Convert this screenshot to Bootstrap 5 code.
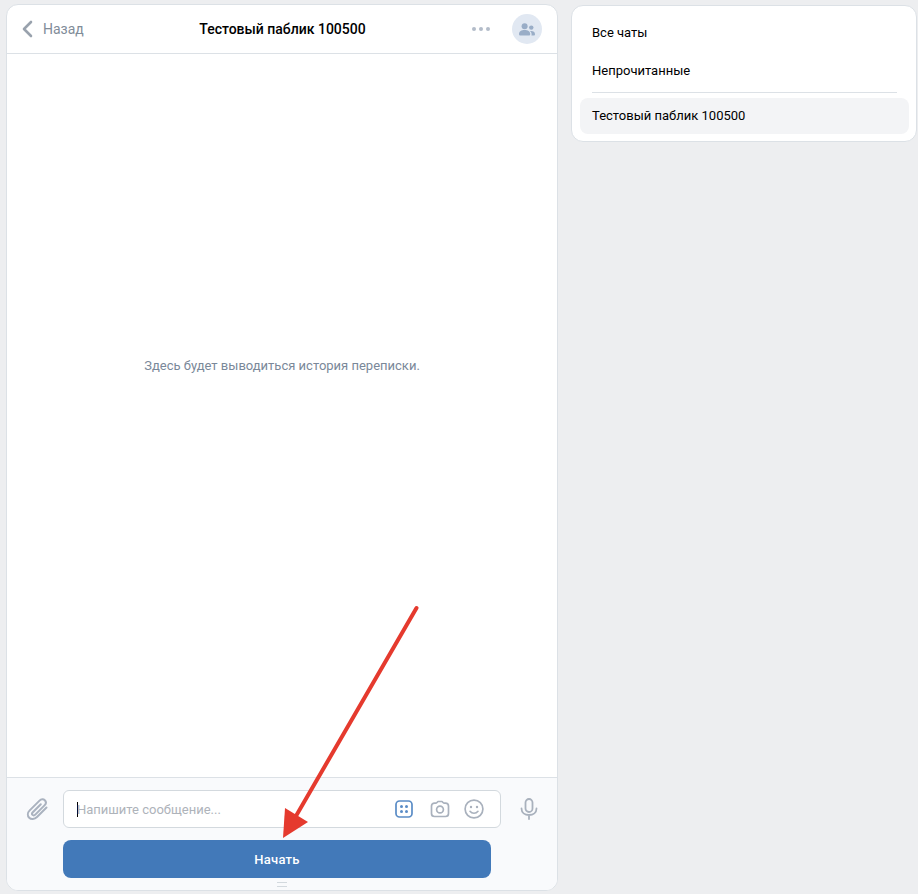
<!DOCTYPE html>
<html lang="ru">

<head>
    <meta charset="UTF-8" />
    <meta name="viewport" content="width=device-width, initial-scale=1" />
    <title>Тестовый паблик 100500</title>
    <link href="https://cdn.jsdelivr.net/npm/bootstrap@5.3.2/dist/css/bootstrap.min.css" rel="stylesheet" />
    <style>
        html, body { height: 100%; }
        body {
            background: #edeef0;
            font-family: Roboto, "Liberation Sans", sans-serif;
            font-size: 13px;
            color: #000;
            overflow: hidden;
        }
        .page-wrap { width: 918px; height: 894px; padding: 4px 0 3px 6px; gap: 13px; }
        .chat-panel {
            width: 552px; background: #fff;
            border: 1px solid #dce1e6; border-radius: 12px; overflow: hidden;
        }
        .chat-head {
            height: 49px; padding: 0 15px 0 14px;
            border-bottom: 1px solid #dce1e6;
        }
        .back-link { color: #818c99; font-size: 14px; width: 140px; gap: 10px; }
        .chat-title { font-weight: 500; font-size: 14px; margin-left: 2px; }
        .head-tools { width: 140px; gap: 21px; }
        .avatar-btn {
            width: 30px; height: 30px; border-radius: 50%; background: #e1e8f2;
        }
        .history-note { color: #7a8899; font-size: 13px; padding-bottom: 100px; }
        .composer {
            height: 113px; background: #f9fafc;
            border-top: 1px solid #dce1e6;
            padding: 12px 0 0 18px;
        }
        .composer-row { gap: 12px; }
        .msg-box {
            width: 438px; height: 38px; background: #fff;
            border: 1px solid #d3d9de; border-radius: 6px;
            padding: 0 16px 0 13px; flex-shrink: 0;
        }
        .caret-mark { width: 1px; height: 15px; background: #000; }
        .msg-hint { color: #aeb3ba; font-size: 13px; margin-left: -1px; padding-top: 1px; }
        .box-icons { gap: 14px; }
        .grid-icon { margin-right: 3px; }
        .mic-icon { flex-shrink: 0; margin-left: 7px; }
        .start-btn {
            display: block; width: 428px; height: 38px; margin: 12px 0 0 38px; padding: 1px 0 0;
            background: #4279b9; border: 0; border-radius: 8px;
            color: #fff; font-size: 13px; font-weight: 500; letter-spacing: .25px;
        }
        .grip-mark {
            width: 10px; height: 5px; margin: 4px 0 0 252px;
            border-top: 1px solid #d3d9de; border-bottom: 1px solid #d3d9de;
        }
        .side-panel {
            width: 346px; height: 137px; margin-top: 1px; padding: 8px;
            background: #fff; border: 1px solid #dce1e6; border-radius: 12px;
        }
        .side-item { height: 38px; padding: 0 12px; color: #000; text-decoration: none; }
        .side-sep { height: 1px; margin: 2px 11px 5px 12px; background: #dce1e6; }
        .side-item.is-active { height: 36px; margin-right: -1px; background: #f3f4f6; border-radius: 8px; }
        .note-arrow { position: absolute; left: 0; top: 0; pointer-events: none; }
    </style>
</head>

<body>
    <div class="page-wrap d-flex align-items-start">
        <div class="chat-panel d-flex flex-column h-100">
            <div class="chat-head d-flex align-items-center justify-content-between flex-shrink-0">
                <div class="back-link d-flex align-items-center">
                    <svg width="12" height="18" viewBox="0 0 12 18" fill="none"><path d="M10 2 3 9l7 7" stroke="#99a2ad" stroke-width="2.6" stroke-linecap="round" stroke-linejoin="round"/></svg>
                    <span>Назад</span>
                </div>
                <div class="chat-title">Тестовый паблик 100500</div>
                <div class="head-tools d-flex align-items-center justify-content-end">
                    <svg width="20" height="6" viewBox="0 0 20 6" fill="#b3bcc9"><circle cx="3" cy="3" r="2"/><circle cx="10" cy="3" r="2"/><circle cx="17" cy="3" r="2"/></svg>
                    <div class="avatar-btn d-flex align-items-center justify-content-center">
                        <svg width="16" height="13" viewBox="0 0 16 13" fill="#99adc7"><circle cx="5.6" cy="3.2" r="3"/><path d="M0 11c0-2.700 2.500-4 5.600-4s5.600 1.300 5.600 4c0 1-.5 1.500-1.500 1.500H1.500C.5 12.500 0 12 0 11Z"/><circle cx="12.300" cy="4.600" r="2.200"/><path d="M12.400 12.500h2.300c.8 0 1.300-.4 1.300-1.200 0-2-1.600-3.200-3.900-3.200-.4 0-.7 0-1 .1 1 .8 1.500 1.800 1.500 3 0 .5 0 .9-.2 1.300Z"/></svg>
                    </div>
                </div>
            </div>
            <div class="flex-grow-1 d-flex align-items-center justify-content-center">
                <div class="history-note">Здесь будет выводиться история переписки.</div>
            </div>
            <div class="composer flex-shrink-0">
                <div class="composer-row d-flex align-items-center">
                    <svg width="26" height="26" viewBox="0 0 26 26" fill="none"><path d="M21.500 11.500 12 21c-2.500 2.500-6 2.500-7.800.7-1.900-1.900-1.800-5 .5-7.300l9.800-9.800c1.700-1.700 4-1.700 5.300-.4 1.400 1.400 1.300 3.600-.3 5.200l-9.200 9.200c-1 1-2.100 1-2.800.3-.7-.7-.6-1.800.3-2.700l8-8" stroke="#aab2bf" stroke-width="2" stroke-linecap="round"/></svg>
                    <div class="msg-box d-flex align-items-center">
                        <span class="caret-mark"></span>
                        <span class="msg-hint">Напишите сообщение...</span>
                        <div class="box-icons d-flex align-items-center ms-auto">
                            <svg class="grid-icon" width="18" height="18" viewBox="0 0 18 18" fill="none"><rect x="1" y="1" width="16" height="16" rx="3.500" stroke="#5a8cc6" stroke-width="1.700"/><g fill="#5a8cc6"><circle cx="6.500" cy="6.500" r="1.500"/><circle cx="11.500" cy="6.500" r="1.500"/><circle cx="6.500" cy="11.500" r="1.500"/><circle cx="11.500" cy="11.500" r="1.500"/></g></svg>
                            <svg width="20" height="18" viewBox="0 0 20 18" fill="none" stroke="#a9b1bd" stroke-width="1.700"><path d="M7 2.500 8 1.500h4l1 1c.4.4.8.6 1.400.6h1.100c1.700 0 3 1.200 3 3v7.400c0 1.800-1.300 3-3 3h-11c-1.700 0-3-1.200-3-3V6.100c0-1.800 1.300-3 3-3h1.100c.6 0 1-.2 1.400-.6Z" stroke-linejoin="round"/><circle cx="10" cy="9.500" r="3.400"/></svg>
                            <svg width="20" height="20" viewBox="0 0 20 20" fill="none"><circle cx="10" cy="10" r="8.900" stroke="#a9b1bd" stroke-width="1.700"/><circle cx="7" cy="8" r="1.200" fill="#a9b1bd"/><circle cx="13" cy="8" r="1.200" fill="#a9b1bd"/><path d="M6 12.300c1 1.300 2.400 2 4 2s3-.7 4-2" stroke="#a9b1bd" stroke-width="1.600" stroke-linecap="round"/></svg>
                        </div>
                    </div>
                    <svg class="mic-icon" width="18" height="22" viewBox="0 0 18 22" fill="none" stroke="#a9b1bd" stroke-width="1.800" stroke-linecap="round"><rect x="5.500" y="1" width="7" height="13" rx="3.500"/><path d="M1.500 10.500c0 4 3.300 6.500 7.500 6.500s7.500-2.500 7.500-6.500M9 17v4"/></svg>
                </div>
                <button class="start-btn" type="button">Начать</button>
                <div class="grip-mark"></div>
            </div>
        </div>
        <div class="side-panel">
            <a class="side-item d-flex align-items-center" href="#">Все чаты</a>
            <a class="side-item d-flex align-items-center" href="#">Непрочитанные</a>
            <div class="side-sep"></div>
            <a class="side-item is-active d-flex align-items-center" href="#">Тестовый паблик 100500</a>
        </div>
    </div>
    <svg class="note-arrow" width="918" height="894" viewBox="0 0 918 894">
        <path d="M416.500 608 296 816" stroke="#e53a2e" stroke-width="4" stroke-linecap="round" fill="none"/>
        <path d="M283 838 285 808 308 822Z" fill="#e53a2e"/>
    </svg>
    <script src="https://cdn.jsdelivr.net/npm/bootstrap@5.3.2/dist/js/bootstrap.bundle.min.js"></script>
</body>

</html>
